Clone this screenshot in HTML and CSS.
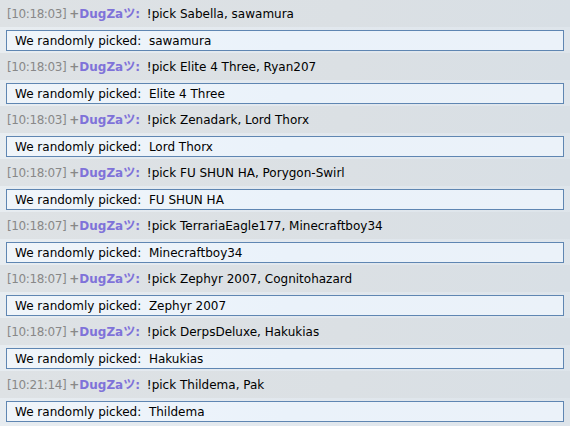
FILE: index.html
```html
<!DOCTYPE html>
<html lang="en">
<head>
  <meta charset="UTF-8">
  <title>Lobby chat</title>
  <link rel="stylesheet" href="styles.css">
</head>
<body>
  <div class="chatlog">
    <div class="chat"><small>[10:18:03]</small><strong><span class="rank">+</span><span class="name">DugZaツ:</span></strong> <em>!pick Sabella, sawamura</em></div>
    <div class="infobox">We randomly picked:&nbsp; sawamura</div>

    <div class="chat"><small>[10:18:03]</small><strong><span class="rank">+</span><span class="name">DugZaツ:</span></strong> <em>!pick Elite 4 Three, Ryan207</em></div>
    <div class="infobox">We randomly picked:&nbsp; Elite 4 Three</div>

    <div class="chat"><small>[10:18:03]</small><strong><span class="rank">+</span><span class="name">DugZaツ:</span></strong> <em>!pick Zenadark, Lord Thorx</em></div>
    <div class="infobox">We randomly picked:&nbsp; Lord Thorx</div>

    <div class="chat"><small>[10:18:07]</small><strong><span class="rank">+</span><span class="name">DugZaツ:</span></strong> <em>!pick FU SHUN HA, Porygon-Swirl</em></div>
    <div class="infobox">We randomly picked:&nbsp; FU SHUN HA</div>

    <div class="chat"><small>[10:18:07]</small><strong><span class="rank">+</span><span class="name">DugZaツ:</span></strong> <em>!pick TerrariaEagle177, Minecraftboy34</em></div>
    <div class="infobox">We randomly picked:&nbsp; Minecraftboy34</div>

    <div class="chat"><small>[10:18:07]</small><strong><span class="rank">+</span><span class="name">DugZaツ:</span></strong> <em>!pick Zephyr 2007, Cognitohazard</em></div>
    <div class="infobox">We randomly picked:&nbsp; Zephyr 2007</div>

    <div class="chat"><small>[10:18:07]</small><strong><span class="rank">+</span><span class="name">DugZaツ:</span></strong> <em>!pick DerpsDeluxe, Hakukias</em></div>
    <div class="infobox">We randomly picked:&nbsp; Hakukias</div>

    <div class="chat"><small>[10:21:14]</small><strong><span class="rank">+</span><span class="name">DugZaツ:</span></strong> <em>!pick Thildema, Pak</em></div>
    <div class="infobox">We randomly picked:&nbsp; Thildema</div>
  </div>
</body>
</html>
```

FILE: styles.css
```css
body {
  margin: 0;
  background: linear-gradient(100deg, #e8edf1 0%, #e2e8ee 50%, #dde4ea 100%);
  font-family: "DejaVu Sans", Verdana, "Noto Sans CJK JP", sans-serif;
  font-size: 12px;
  color: #000;
}

.chat {
  height: 27px;
  line-height: 28px;
  padding-left: 7px;
  background: linear-gradient(100deg, #dee2e5 0%, #dbe0e4 60%, #d8dfe5 100%);
  white-space: nowrap;
}

.chat small {
  font-size: 12px;
  letter-spacing: -0.4px;
  color: #888;
}

.chat strong {
  font-weight: bold;
  margin-left: 3px;
}

.chat .rank {
  color: #888;
}

.chat .name {
  color: #7f72d9;
}

.chat em {
  font-style: normal;
  margin-left: 3px;
}

.infobox {
  margin: 3px 6px 2px 6px;
  height: 19px;
  line-height: 20px;
  padding-left: 8px;
  border: 1px solid #5f86b2;
  background: linear-gradient(100deg, #f0f5fa 0%, #eaf2fa 50%, #ebf2f9 100%);
}
```
